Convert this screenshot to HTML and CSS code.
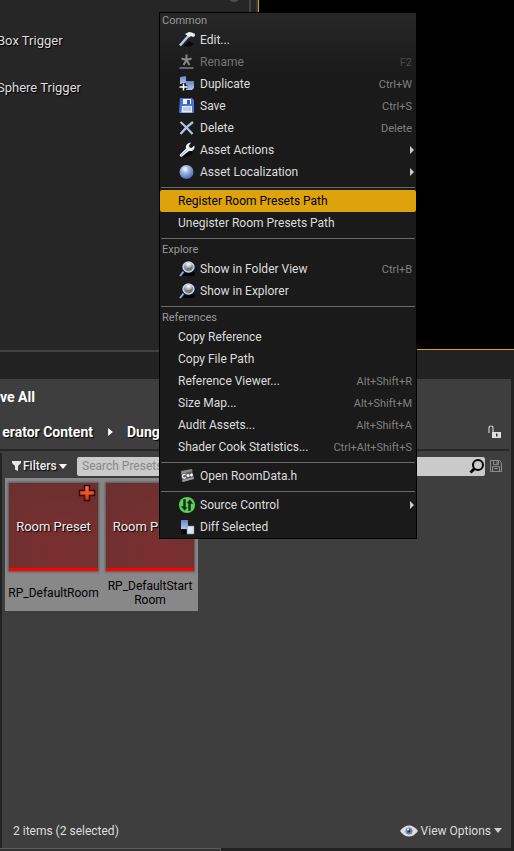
FILE: index.html
```html
<!DOCTYPE html>
<html lang="en">
<head>
<meta charset="utf-8">
<title>Content Browser</title>
<link rel="stylesheet" href="styles.css">
</head>
<body>
<svg class="defs" aria-hidden="true">
  <defs>
    <linearGradient id="steel" x1="0" y1="0" x2="1" y2="1"><stop offset="0" stop-color="#fff"/><stop offset="1" stop-color="#6f8fd0"/></linearGradient>
    <linearGradient id="blue" x1="0" y1="0" x2="0" y2="1"><stop offset="0" stop-color="#6583c8"/><stop offset="1" stop-color="#b4c4ee"/></linearGradient>
    <radialGradient id="ball" cx=".4" cy=".3" r=".7"><stop offset="0" stop-color="#fff"/><stop offset=".35" stop-color="#a9bce8"/><stop offset="1" stop-color="#4c6cb8"/></radialGradient>
    <radialGradient id="lens" cx=".5" cy=".2" r=".8"><stop offset="0" stop-color="#fff"/><stop offset=".6" stop-color="#888"/><stop offset="1" stop-color="#ddd"/></radialGradient>
    <linearGradient id="plus" x1="0" y1="0" x2="0" y2="1"><stop offset="0" stop-color="#ff7a3c"/><stop offset="1" stop-color="#e02a0c"/></linearGradient>
    <symbol id="magnify" viewBox="0 0 18 18">
      <path d="M4 16h12l1-4-8-1z" fill="#050505"/>
      <path d="M2 16l4-5" stroke="#8fa9e6" stroke-width="2"/>
      <ellipse cx="10.500" cy="7" rx="5.500" ry="5" fill="url(#lens)" stroke="#0a0f20" stroke-width="3"/>
      <ellipse cx="10.500" cy="7" rx="5.500" ry="5" fill="url(#lens)" stroke="#c5d3f5" stroke-width="1.400"/>
      <path d="M6.500 8.500q4 1 8-2l-.5 3.500-3 1.500-3-1z" fill="#555" opacity=".6"/>
    </symbol>
  </defs>
</svg>

<main class="editor">
  <section class="upper">
    <div class="modes">
      <span class="knob"></span>
      <ul class="actors">
        <li><span>Box Trigger</span></li>
        <li><span>Sphere Trigger</span></li>
      </ul>
      <div class="scroll-track"></div>
    </div>
    <div class="viewport"></div>
  </section>
  <div class="tab-strip"></div>

  <section class="browser">
    <div class="toolbar"><button class="save-all" type="button">ve All</button></div>
    <nav class="path">
      <a class="crumb-root" href="#">erator Content</a>
      <svg class="crumb-arrow" viewBox="0 0 6 10"><path d="M0 0l6 5-6 5z" fill="#fff"/></svg>
      <a class="crumb" href="#">Dungeon</a>
      <button class="lock" type="button" aria-label="Lock">
        <svg width="14" height="14" viewBox="0 0 14 14"><path d="M1 8V3q0-2 2-2t2 2v4" fill="none" stroke="#ccc" stroke-width="1.200"/><path d="M4 7h9v6H4z" fill="#ddd"/><path d="M8 8.500h1.500v3H8z" fill="#333"/></svg>
      </button>
    </nav>
    <div class="assets">
      <div class="search-row">
        <button class="filters" type="button">
          <svg width="9" height="10" viewBox="0 0 9 10"><path d="M0 0h9v2L6 5v5L3 8.500V5L0 2z" fill="#e8e8e8"/></svg>
          Filters
          <svg width="8" height="5" viewBox="0 0 8 5"><path d="M0 0h8L4 5z" fill="#fff"/></svg>
        </button>
        <div class="search">
          <input type="text" placeholder="Search Presets" aria-label="Search Presets">
          <svg width="16" height="16" viewBox="0 0 16 16"><circle cx="9" cy="7" r="5" fill="none" stroke="#000" stroke-width="2"/><path d="M5.500 10.500L1.500 14.500" stroke="#000" stroke-width="3"/></svg>
        </div>
        <button class="save-search" type="button" aria-label="Save search">
          <svg width="12" height="12" viewBox="0 0 12 12" fill="none" stroke="#8c8c8c"><path d="M.5.5h9l2 2v9H.5z"/><path d="M3.500.5v4h5v-4M2.500 11.500v-5h7v5M7 1v3M4 8.500h4" /></svg>
        </button>
      </div>
      <ul class="tiles">
        <li class="tile">
          <div class="thumb">Room Preset
            <svg class="add" viewBox="0 0 18 18"><path d="M6.500 1.500h5v5h5v5h-5v5h-5v-5h-5v-5h5z" fill="url(#plus)" stroke="#300a08" stroke-width="1.500"/></svg>
          </div>
          <div class="name">RP_DefaultRoom</div>
        </li>
        <li class="tile">
          <div class="thumb">Room Preset</div>
          <div class="name">RP_DefaultStart<br>Room</div>
        </li>
      </ul>
      <footer class="status">
        <span>2 items (2 selected)</span>
        <button class="view-options" type="button">
          <svg width="18" height="12" viewBox="0 0 18 12"><path d="M0 6q4-5.500 9-5.500T18 6q-4 5.500-9 5.500T0 6z" fill="#dedede"/><circle cx="9" cy="6" r="3.500" fill="#6a80b0"/><circle cx="9" cy="6" r="1.500" fill="#2a3350"/><circle cx="8" cy="4.500" r="1" fill="#fff"/></svg>
          <span>View Options</span>
          <svg width="8" height="5" viewBox="0 0 8 5"><path d="M0 0h8L4 5z" fill="#ccc"/></svg>
        </button>
      </footer>
    </div>
  </section>
  <div class="bottom-strip"><div class="bottom-tab"></div></div>

  <div class="menu" role="menu">
    <div class="section">
      <div class="heading">Common</div>
      <button class="item" type="button"><svg class="icon" viewBox="0 0 18 18"><path d="M5 15q7 2 11-2l-5-3z" fill="#080808"/><path d="M2 14.500L10 5.500" stroke="url(#steel)" stroke-width="2.600"/><path d="M7 3l4-2 3 .5 1.500 1 1-.5.5 3-2 1-2-1-2 1.500-2-2z" fill="#e8eef4"/></svg><span>Edit...</span></button>
      <button class="item" type="button" disabled><svg class="icon" viewBox="0 0 18 18"><path d="M8.500 1.500V7M3.500 5.500l5 1.500 5-1.500M5.500 12l3-5 3 5" fill="none" stroke="#8a8a8a" stroke-width="2"/><path d="M1.500 14h14v2h-14z" fill="#666870"/></svg><span>Rename</span><kbd>F2</kbd></button>
      <button class="item" type="button"><svg class="icon" viewBox="0 0 18 18"><path d="M2 2l6-1v6l-1 2H2z" fill="url(#blue)"/><path d="M8 6h8v7l-2 2H8z" fill="url(#blue)"/><path d="M5.500 8v8M1 12h8.500" stroke="#181818" stroke-width="3.500"/><path d="M5.500 8.500v7M1.500 12h8" stroke="#fff" stroke-width="1.500"/></svg><span>Duplicate</span><kbd>Ctrl+W</kbd></button>
      <button class="item" type="button"><svg class="icon" viewBox="0 0 18 18"><path d="M2 1h12l2 2v13H1z" fill="#4c73d2"/><path d="M5 2h8v5H5z" fill="#f4f8ff"/><path d="M9 3h3v4H9z" fill="#3558b8"/><path d="M4 9h10v6.500H3.500z" fill="#e3eafa"/><path d="M5 11h8M5 13h8" stroke="#9baed8"/></svg><span>Save</span><kbd>Ctrl+S</kbd></button>
      <button class="item" type="button"><svg class="icon" viewBox="0 0 18 18"><path d="M2.500 3q6 5 12 12M15 3Q8 8 2.500 15" fill="none" stroke="#b4c2e2" stroke-width="2.200"/></svg><span>Delete</span><kbd>Delete</kbd></button>
      <button class="item" type="button"><svg class="icon" viewBox="0 0 18 18"><path d="M5 16q7 1 10-5l-5-1z" fill="#080808"/><path d="M1.500 14L8 7.500q-1-4 3-5.500l2-.5-2 3 .5 2 2 .5 3-2.500q.5 4-2.500 5.500l-3 0L4 15.500q-2 1-2.500-1.500z" fill="#e9f0f8"/><path d="M3 14.500l6.500-6" stroke="#9fb4d8"/></svg><span>Asset Actions</span><i class="arrow"></i></button>
      <button class="item" type="button"><svg class="icon" viewBox="0 0 18 18"><circle cx="8.500" cy="9" r="7" fill="url(#ball)"/></svg><span>Asset Localization</span><i class="arrow"></i></button>
    </div>
    <div class="section">
      <button class="item active" type="button"><span>Register Room Presets Path</span></button>
      <button class="item" type="button"><span>Unegister Room Presets Path</span></button>
    </div>
    <div class="section">
      <div class="heading">Explore</div>
      <button class="item" type="button"><svg class="icon"><use href="#magnify"/></svg><span>Show in Folder View</span><kbd>Ctrl+B</kbd></button>
      <button class="item" type="button"><svg class="icon"><use href="#magnify"/></svg><span>Show in Explorer</span></button>
    </div>
    <div class="section">
      <div class="heading">References</div>
      <button class="item" type="button"><span>Copy Reference</span></button>
      <button class="item" type="button"><span>Copy File Path</span></button>
      <button class="item" type="button"><span>Reference Viewer...</span><kbd>Alt+Shift+R</kbd></button>
      <button class="item" type="button"><span>Size Map...</span><kbd>Alt+Shift+M</kbd></button>
      <button class="item" type="button"><span>Audit Assets...</span><kbd>Alt+Shift+A</kbd></button>
      <button class="item" type="button"><span>Shader Cook Statistics...</span><kbd>Ctrl+Alt+Shift+S</kbd></button>
    </div>
    <div class="section">
      <button class="item" type="button"><svg class="icon" viewBox="0 0 18 18"><path d="M3 5l11-2 2 8-12 4z" fill="#5e5e5e"/><path d="M3 4l11-2 .5 2L3.500 7z" fill="#8a8a8a"/><path d="M4 13l12-3v2L5 15z" fill="#99a"/><path d="M7.500 7.500Q4 7 4.500 9.500t3.500 1M8.500 8.500h3M10 7v3M12 8h3M13.500 6.500v3" fill="none" stroke="#fff" stroke-width="1.300"/></svg><span>Open RoomData.h</span></button>
    </div>
    <div class="section">
      <button class="item" type="button"><svg class="icon" viewBox="0 0 18 18"><circle cx="9" cy="9" r="8" fill="#58d455"/><path d="M8 3H5v7H2.500l4 5 3.500-4H8zM10 15h3V8h2.500l-3.500-5-4 4.500h2z" fill="#1c2a1c" stroke="#58d455" stroke-width=".5"/></svg><span>Source Control</span><i class="arrow"></i></button>
      <button class="item" type="button"><svg class="icon" viewBox="0 0 18 18"><path d="M3 12h6v4H3z" fill="#060606"/><path d="M3 2h7v9H3z" fill="url(#blue)"/><path d="M9 8h7v8H9z" fill="#dfe6f4" stroke="#777f92" stroke-width=".6"/></svg><span>Diff Selected</span></button>
    </div>
  </div>
</main>
</body>
</html>
```

FILE: styles.css
```css
* { box-sizing: border-box; }

body {
  margin: 0;
  background: #222;
  color: #ddd;
  font: 13px/16px Roboto, "Liberation Sans", sans-serif;
}

ul { list-style: none; margin: 0; padding: 0; }

button {
  border: 0;
  padding: 0;
  background: none;
  color: inherit;
  font: inherit;
  text-align: left;
}

a { color: inherit; text-decoration: none; }

svg { flex: none; }

.defs { position: absolute; width: 0; height: 0; }

.editor {
  position: relative;
  display: flex;
  flex-direction: column;
  min-height: 100vh;
  overflow: hidden;
}

/* Placement list and viewport */
.upper { display: flex; height: 352px; }

.modes {
  position: relative;
  display: flex;
  width: 258px;
  background: #262626;
  border-bottom: 2px solid #414141;
  text-shadow: 1px 1px 1px #000;
}

.knob {
  position: absolute;
  top: -10px;
  left: 228px;
  width: 12px;
  height: 12px;
  border-radius: 50%;
  background: #4a5060;
}

.actors { flex: 1; padding-top: 17px; }

.actors li {
  display: flex;
  align-items: center;
  height: 47px;
  margin-left: -3px;
}

.scroll-track {
  width: 9px;
  border-left: 2px solid #424242;
  border-right: 2px solid #3a3a3a;
}

.viewport {
  flex: 1;
  background: #000;
  border: solid #dda20c;
  border-width: 0 0 1px 1px;
  margin-bottom: 2px;
}

.tab-strip { height: 27px; background: #222; }

/* Content browser */
.browser {
  flex: 1;
  display: flex;
  flex-direction: column;
  margin-right: 3px;
  background: #3e3e3e;
}

.toolbar, .path {
  display: flex;
  align-items: center;
  height: 35px;
  color: #fff;
  font-size: 14px;
  font-weight: 700;
  text-shadow: 1px 1px 1px #000;
}

.save-all { white-space: nowrap; }

.path {
  margin-right: 2px;
  border-bottom: 2px solid #262626;
  height: 37px;
}

.crumb-root {
  min-width: 93px;
  text-align: right;
  white-space: nowrap;
}

.crumb-arrow { width: 5px; height: 8px; margin: 0 14px 0 15px; }

.lock { display: flex; margin: 0 7px 0 auto; }

.assets {
  flex: 1;
  display: flex;
  flex-direction: column;
  margin-top: 2px;
  border-left: 2px solid #222;
}

.search-row {
  display: flex;
  align-items: center;
  height: 25px;
  padding: 1px 9px 0 10px;
}

.filters {
  display: flex;
  align-items: center;
  gap: 2px;
  width: 65px;
  color: #eee;
  font-size: 12px;
  font-weight: 500;
  text-shadow: 1px 1px 1px #000;
}

.search {
  flex: 1;
  display: flex;
  align-items: center;
  height: 19px;
  border-radius: 2px;
  background: #cacaca;
}

.search input {
  flex: 1;
  min-width: 0;
  padding: 0 5px;
  border: 0;
  outline: 0;
  background: none;
  font: 12px Roboto, sans-serif;
}

.search input::placeholder { color: #888; opacity: 1; }

.save-search { display: flex; margin-left: 5px; }

.tiles { display: flex; padding-left: 3px; }

.tile {
  width: 97px;
  height: 133px;
  padding: 5px 4px 4px;
  background: #888;
}

.tile + .tile { width: 96px; }

.thumb {
  position: relative;
  display: flex;
  align-items: center;
  justify-content: center;
  height: 88px;
  padding-top: 3px;
  border-bottom: 3px solid #f00;
  background: radial-gradient(circle at 60% 80%, #7a2f2f, #6b3030);
  box-shadow: 0 0 2px 1px #555;
  color: #eee;
  text-shadow: 1px 1px 1px #000;
}

.add { position: absolute; top: 1px; right: 2px; width: 18px; height: 18px; }

.name {
  display: flex;
  align-items: center;
  justify-content: center;
  height: 43px;
  color: #000;
  font-size: 12px;
  line-height: 14px;
  text-align: center;
}

.status {
  display: flex;
  justify-content: space-between;
  align-items: center;
  margin-top: auto;
  height: 35px;
  padding: 0 9px 0 11px;
  font-size: 12px;
}

.view-options { display: flex; align-items: center; gap: 3px; }

.bottom-strip { height: 3px; }

.bottom-tab {
  width: 221px;
  height: 3px;
  border: solid #5a5a5a;
  border-width: 1px 1px 0 0;
  background: #333;
}

/* Context menu */
.menu {
  position: absolute;
  top: 12px;
  left: 159px;
  width: 258px;
  border: 1px solid #000;
  background: linear-gradient(#272727, #1a1a1a 60px);
}

.section + .section::before {
  content: "";
  display: block;
  height: 1px;
  margin: 4px 1px 2px;
  background: #686868;
}

.heading {
  height: 16px;
  padding-left: 2px;
  color: #999;
  font-size: 11px;
}

.section + .section .heading { height: 17px; line-height: 18px; }

.item {
  display: flex;
  align-items: center;
  gap: 4px;
  width: 100%;
  height: 22px;
  padding: 0 4px 0 18px;
  color: #ddd;
  font-size: 12px;
  white-space: nowrap;
}

.item:disabled { color: #757575; }

.item.active { border-radius: 2px; background: #dda20c; color: #000; }

.icon { width: 18px; height: 18px; }

kbd {
  margin-left: auto;
  color: #808080;
  font: 11px Roboto, sans-serif;
}

.item:disabled kbd { color: #4c4c4c; }

.arrow {
  margin: 0 -2px 0 auto;
  border: solid transparent;
  border-width: 4px 0 4px 4px;
  border-left-color: #ccc;
}
```
